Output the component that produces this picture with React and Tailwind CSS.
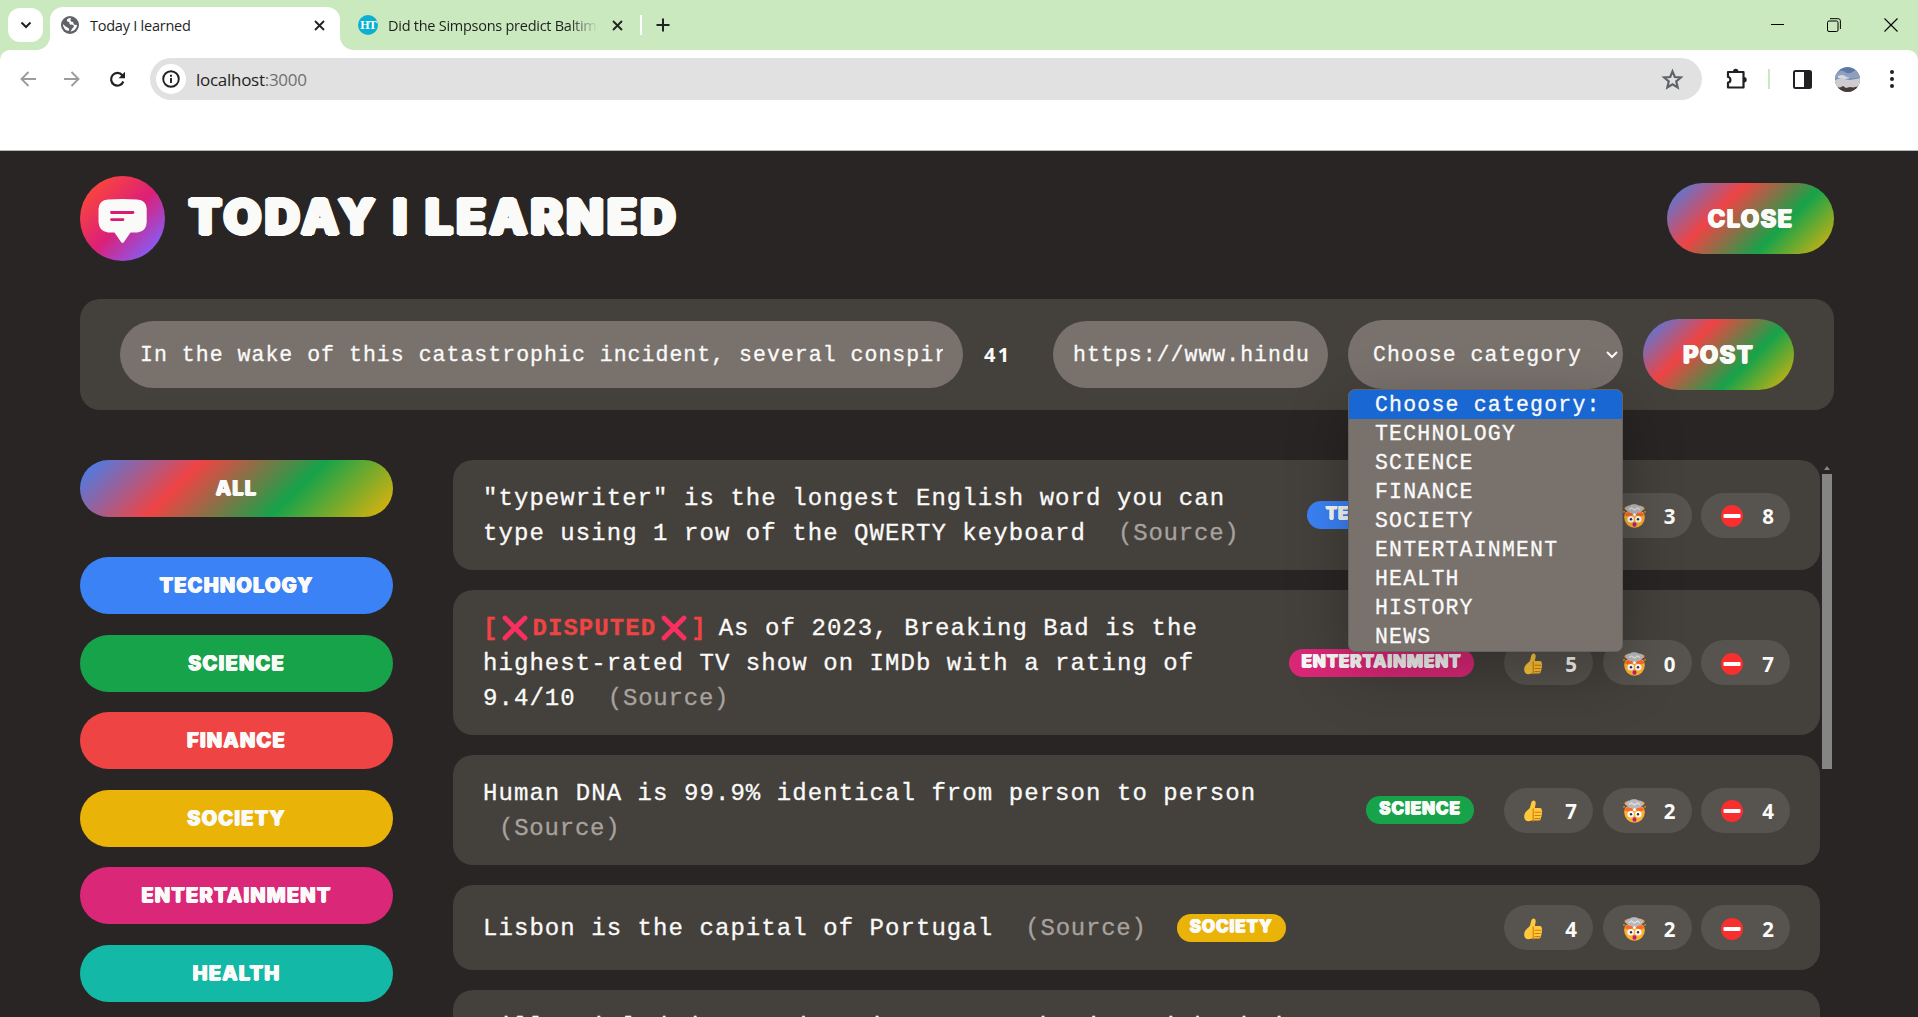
import React from "react";

const MONO = "font-['Liberation_Mono',monospace] [-webkit-text-stroke:0.3px_currentColor]";
const UI = "font-['Open_Sans','Noto_Sans',sans-serif]";
const DISPLAY = "font-['Inter',sans-serif] font-extrabold text-[#fafaf9] uppercase whitespace-nowrap";
const ROUND_SM =
  "[text-shadow:0.7px_0_0_currentColor,-0.7px_0_0_currentColor,0_0.5px_0_currentColor,0_-0.5px_0_currentColor]";
const ROUND_LG =
  "[text-shadow:2.6px_0_0_currentColor,-2.6px_0_0_currentColor,0_2px_0_currentColor,0_-2px_0_currentColor,1.8px_1.4px_0_currentColor,-1.8px_1.4px_0_currentColor,1.8px_-1.4px_0_currentColor,-1.8px_-1.4px_0_currentColor]";
const RAINBOW = "bg-[linear-gradient(135deg,#3b82f6,#ef4444,#16a34a,#eab308)]";

const CATEGORIES = [
  { name: "technology", bg: "bg-[#3b82f6]" },
  { name: "science", bg: "bg-[#16a34a]" },
  { name: "finance", bg: "bg-[#ef4444]" },
  { name: "society", bg: "bg-[#eab308]" },
  { name: "entertainment", bg: "bg-[#db2777]" },
  { name: "health", bg: "bg-[#14b8a6]" },
];

const OPTIONS = ["TECHNOLOGY", "SCIENCE", "FINANCE", "SOCIETY", "ENTERTAINMENT", "HEALTH", "HISTORY", "NEWS"];

const FACTS = [
  {
    lines: ['"typewriter" is the longest English word you can', "type using 1 row of the QWERTY keyboard"],
    tag: "technology", tagBg: "bg-[#3b82f6]", tagW: "w-[167px]", votes: [12, 3, 8],
  },
  {
    disputed: true,
    lines: ["As of 2023, Breaking Bad is the", "highest-rated TV show on IMDb with a rating of", "9.4/10"],
    tag: "entertainment", tagBg: "bg-[#db2777]", tagW: "w-[185px]", votes: [5, 0, 7],
  },
  {
    lines: ["Human DNA is 99.9% identical from person to person", ""],
    tag: "science", tagBg: "bg-[#16a34a]", tagW: "w-[108px]", votes: [7, 2, 4],
  },
  {
    lines: ["Lisbon is the capital of Portugal"],
    inlineTag: true,
    tag: "society", tagBg: "bg-[#eab308]", tagW: "w-[109px]", votes: [4, 2, 2],
  },
];

function Thumb() {
  return (
    <svg width="20" height="24" viewBox="0 0 20 24" className="mt-[2px] shrink-0">
      <path d="M9.2 1.2c1.6-1.2 3.6-.2 3.5 2.2 0 1.6-.8 3.4-.8 4.9h5c1.5 0 2 1 1.7 2 .6.6.8 1.8.1 2.6.5.8.4 2-.3 2.6.4.9.2 1.9-.6 2.4.3 1.600-.7 2.900-2.600 2.900H8.500C4 22.800 1.200 20.300 1.200 16.600c0-4 2.800-5.400 5-7.600C8 7 7.600 2.500 9.200 1.200z" transform="translate(0 .8)" fill="#ffc83d" />
      <path d="M10.200 9.500v13M11.500 13.200h6.500M11.500 16.500h6.200M11.500 19.600h5.600" stroke="#d67d00" strokeWidth="1.100" fill="none" />
    </svg>
  );
}

function MindBlown() {
  return (
    <svg width="24" height="24" viewBox="0 0 24 24" className="mt-[2px] shrink-0">
      <circle cx="12.500" cy="13.500" r="10.300" fill="#ffb02e" />
      <path d="M1 8 24 8 21 2H4z" fill="#57534e" />
      <path d="M2.600 11c3-4 6-4.500 9.900-2.500C16 6.500 19.500 7 22.400 11l-3.400 1.500-6.500-1.500L6 12.500z" fill="#ff6723" />
      <circle cx="4.500" cy="4.300" r="1.900" fill="#f59a23" />
      <circle cx="20.600" cy="4.300" r="1.900" fill="#f59a23" />
      <circle cx="2" cy="7.800" r=".9" fill="#f59a23" />
      <circle cx="23" cy="7.800" r=".9" fill="#f59a23" />
      <path d="M4 5.500C3 3.500 5.500 1 8 1.500c1-1.600 7-1.600 8.500 0 3-.4 5.500 2 4.500 4-.5 2-3 3.700-5.500 3.500l-1.500 1.500h-3.200L9.300 9C7 9.200 4.500 7.500 4 5.500z" fill="#b9b9bb" />
      <path d="M7 5.500 9.500 4l3 2 3-2 2.500 1.500" stroke="#e4e4e4" strokeWidth="1.100" fill="none" />
      <path d="M11 10.500l1.500-1.800 1.500 1.800-.6 1.500h-1.800z" fill="#fff" />
      <circle cx="8.700" cy="15.200" r="3.200" fill="#fff" />
      <circle cx="16.300" cy="15.200" r="3.200" fill="#fff" />
      <circle cx="9" cy="15.200" r="1.200" fill="#402a32" />
      <circle cx="16" cy="15.200" r="1.200" fill="#402a32" />
      <ellipse cx="12.500" cy="20.500" rx="2" ry="2.200" fill="#bb1d80" />
    </svg>
  );
}

function NoEntry() {
  return (
    <svg width="24" height="24" viewBox="0 0 24 24" className="mt-[2px] shrink-0">
      <circle cx="12" cy="12" r="11" fill="#f92f2f" />
      <rect x="3.500" y="10" width="17" height="4" rx="1" fill="#fff" />
    </svg>
  );
}

function CrossMark() {
  return (
    <svg width="26" height="26" viewBox="0 0 26 26" className="shrink-0">
      <path d="M3 3 23 23M23 3 3 23" stroke="#f92f60" strokeWidth="4.800" strokeLinecap="round" />
    </svg>
  );
}

function CloseX({ className }) {
  return (
    <svg width="11" height="11" viewBox="0 0 11 11" className={className}>
      <path d="M1 1 10 10M10 1 1 10" stroke="#202124" strokeWidth="1.800" />
    </svg>
  );
}

function Fillet({ className, flip }) {
  return (
    <svg width="14" height="14" viewBox="0 0 14 14" className={className}>
      <path d={flip ? "M0 0A14 14 0 0 0 14 14H0z" : "M14 0A14 14 0 0 1 0 14h14z"} fill="#fff" />
    </svg>
  );
}

function TabStrip() {
  return (
    <div className="flex h-[50px] items-start bg-[#cae9bf]">
      <div className="ml-2 mt-2 flex h-[34px] w-[35px] items-center justify-center rounded-xl bg-white">
        <svg width="12" height="8" viewBox="0 0 12 8"><path d="M1.500 1.500 6 6l4.500-4.500" stroke="#202124" strokeWidth="2" fill="none" /></svg>
      </div>
      <div className="relative ml-[7px] mt-[7px] flex h-[43px] w-[290px] items-center rounded-t-[13px] bg-white pb-[7px]">
        <Fillet className="absolute -left-[14px] bottom-0" />
        <Fillet className="absolute -right-[14px] bottom-0" flip />
        <svg width="18" height="18" viewBox="0 0 18 18" className="ml-[11px]">
          <circle cx="9" cy="9" r="9" fill="#5f6368" />
          <path d="M10 1.800C7.500 2 5.500 3.500 6 5c.4 1 1.800.5 2.300 1.300.5.900-.3 1.700.7 2.200 1.300.500 3.300-.3 3.800 1.200.300 1.100-.6 1.800-1.300 2.500-.8.900-1 2.300-2.300 3.200 4-.2 6.800-3.200 6.800-7-1 .8-2.500.8-3.200-.2-.6-.8-.1-1.600-.9-2.200-.8-.5-1.700-.2-2.200-1.100C9.200 3.700 9.800 3 10 1.800zM2 8c0 2.500 1 4.500 2.500 5.800C5.500 14.600 7 15 7.800 14.500c.8-.6.300-1.800-.5-2.500C6 11 3.500 10 2 8z" fill="#fff" />
        </svg>
        <span className={`${UI} ml-[11px] mt-[2px] w-[200px] text-[14.500px] tracking-[-0.240px] text-[#1f1f1f]`}>Today I learned</span>
        <CloseX className="ml-[24px]" />
      </div>
      <div className="mt-[7px] flex h-9 items-center">
        <div className="ml-[18px] flex size-5 items-center justify-center rounded-full bg-[#09b0d2] font-['Liberation_Serif',serif] text-[12px] font-bold leading-none tracking-[-1px] text-white">HT</div>
        <span className={`${UI} ml-[10px] mt-[2px] w-[210px] overflow-hidden whitespace-nowrap text-[14.500px] tracking-[-0.260px] text-[#1f1f1f] [mask-image:linear-gradient(to_right,#000_86%,transparent)]`}>
          Did the Simpsons predict Baltimore
        </span>
        <CloseX className="ml-[14px]" />
        <div className="ml-[17px] h-5 w-[2px] bg-white" />
        <svg width="14" height="14" viewBox="0 0 14 14" className="ml-[14px]"><path d="M7 .5v13M.5 7h13" stroke="#202124" strokeWidth="2" /></svg>
      </div>
      <div className="ml-auto mr-5 mt-[17px] flex items-center gap-[43px]">
        <svg width="13" height="15" viewBox="0 0 13 15"><path d="M0 7.500h13" stroke="#000" /></svg>
        <svg width="14" height="14" viewBox="0 0 14 14" fill="none" stroke="#000"><rect x=".5" y="3" width="10.500" height="10.500" rx="1.500" /><path d="M3 .7h8.200a2.200 2.200 0 0 1 2.200 2.200V11" /></svg>
        <svg width="14" height="14" viewBox="0 0 14 14"><path d="M.5.5l13 13M13.500.5l-13 13" stroke="#000" strokeWidth="1.100" /></svg>
      </div>
    </div>
  );
}

function Toolbar() {
  return (
    <div className="bg-[#cae9bf]">
      <div className="flex h-[100px] items-start rounded-t-[10px] bg-white">
        <div className="mt-2 flex h-[42px] w-full items-center">
          <svg width="16" height="16" viewBox="0 0 16 16" className="ml-5"><path d="M8.500 1 1.500 8l7 7M1.500 8H16" stroke="#9a9c9e" strokeWidth="1.900" fill="none" /></svg>
          <svg width="16" height="16" viewBox="0 0 16 16" className="ml-[28px]"><path d="M7.500 1l7 7-7 7M14.500 8H0" stroke="#9a9c9e" strokeWidth="1.900" fill="none" /></svg>
          <svg width="17" height="17" viewBox="0 0 17 17" className="ml-[29px]"><path d="M14.300 10.500A6.300 6.300 0 1 1 13.300 4.300L14.800 6" stroke="#202124" strokeWidth="2.200" fill="none" /><path d="M16 .8v6.400H9.600z" fill="#202124" /></svg>
          <div className="ml-6 flex h-[42px] w-[1552px] items-center rounded-full bg-[#e1e1e1]">
            <div className="ml-[6px] flex size-[30px] items-center justify-center rounded-full bg-white">
              <svg width="18" height="18" viewBox="0 0 18 18" fill="none" stroke="#202124" strokeWidth="1.900"><circle cx="9" cy="9" r="7.800" /><path d="M9 8v5M9 4.700v2" /></svg>
            </div>
            <span className={`${UI} ml-[10px] mt-[2px] text-[17px] tracking-[-0.280px] text-[#1f1f1f]`}>
              localhost<span className="text-[#707070]">:3000</span>
            </span>
            <svg width="23" height="23" viewBox="0 0 24 24" className="ml-auto mr-[18px]" fill="none" stroke="#5f6368" strokeWidth="2.300"><path d="M12 3.500l2.400 5.900 6.300.5-4.800 4.100 1.500 6.200L12 16.900l-5.400 3.300 1.500-6.200-4.800-4.100 6.300-.5z" /></svg>
          </div>
          <svg width="22" height="22" viewBox="0 0 22 22" className="ml-6">
            <path d="M2 4h15.500v15.500H2v-5c3.200 0 3.200-5.500 0-5.500z" fill="none" stroke="#202124" strokeWidth="2.200" strokeLinejoin="round" />
            <path d="M7 3.500a2.700 2.700 0 0 1 5.400 0zM18 9a2.700 2.700 0 0 1 0 5.400z" fill="#202124" />
          </svg>
          <div className="ml-5 h-5 w-[2px] bg-[#cae9bf]" />
          <svg width="19" height="19" viewBox="0 0 19 19" className="ml-[23px]"><rect x="1" y="1" width="17" height="17" rx="1.500" fill="none" stroke="#202124" strokeWidth="2" /><path d="M11 1h6.500v17H11z" fill="#202124" /></svg>
          <svg width="25" height="25" viewBox="0 0 25 25" className="ml-[23px] rounded-full">
            <rect width="25" height="25" fill="#5f79a6" />
            <path d="M0 6q6-4 10-1t9-1 6 2v4q-6 3-11 1T0 12z" fill="#8fa0bf" />
            <path d="M0 13q5-3 10-1t15-1v10H0z" fill="#cfcbd0" />
            <path d="M3 9q4-2 7 0t6 2q-6 2-13 0z" fill="#d5d9e2" />
            <path d="M0 20l5 .5 3-1.500 3 2 4-1 3 .5 7-1.500v6H0z" fill="#4a3b39" />
          </svg>
          <svg width="4" height="20" viewBox="0 0 4 20" className="ml-[30px]" fill="#202124"><circle cx="2" cy="3" r="2" /><circle cx="2" cy="10" r="2" /><circle cx="2" cy="17" r="2" /></svg>
        </div>
      </div>
      <div className="h-px bg-[#b4bab2]" />
    </div>
  );
}

function Logo() {
  return (
    <svg width="85" height="85" viewBox="0 0 85 85">
      <defs>
        <linearGradient id="logo" x1="0" y1="0" x2="1" y2="1">
          <stop offset=".08" stopColor="#ff4a35" />
          <stop offset=".52" stopColor="#db2078" />
          <stop offset=".9" stopColor="#8060ff" />
        </linearGradient>
      </defs>
      <circle cx="42.500" cy="42.500" r="42.500" fill="url(#logo)" />
      <path d="M28 23.500Q42.500 22.500 57 23.500 66.500 24 66.700 33v13q-.2 9.500-9.200 10.500H50.500L44 66q-1.500 2-3 0L34.500 56.500H28q-9-1-9.500-10.500V33q.5-9 9.500-9.500z" fill="#fafaf9" />
      <path d="M31.500 36.500h21.500M31.500 43.600h11.500" stroke="#db1a72" strokeWidth="2.800" strokeLinecap="round" />
    </svg>
  );
}

function Dropdown() {
  return (
    <div className={`${MONO} absolute left-0 top-[69px] z-10 w-[275px] overflow-hidden rounded-[7px] border border-[#65625f] bg-[#78716c] text-[21.500px] tracking-[1.200px] text-[#fafaf9] shadow-[0_20px_60px_rgba(0,0,0,0.280)]`}>
      <div className="h-[29px] bg-[#1967d2] pl-[26px] leading-[30px]">Choose category:</div>
      {OPTIONS.map((o) => (
        <div key={o} className="h-[29px] pl-[26px] leading-[30px]">{o}</div>
      ))}
    </div>
  );
}

function FactForm() {
  const field = `${MONO} h-[67px] overflow-hidden whitespace-nowrap rounded-full bg-[#78716c] px-5 text-[21.500px] leading-[69px] tracking-[1.030px] text-[#fafaf9]`;
  return (
    <div className="mt-[38px] flex h-[111px] items-center rounded-[20px] bg-[#44403c] px-10">
      <div className={`${field} w-[843px]`}>
        <div className="overflow-hidden">In the wake of this catastrophic incident, several conspir</div>
      </div>
      <span className="ml-[21px] w-[49px] font-['Noto_Sans',sans-serif] text-[20px] font-bold tracking-[2.200px] text-[#fafaf9]">41</span>
      <div className={`${field} ml-5 w-[275px]`}>
        <div className="overflow-hidden">https://www.hindu</div>
      </div>
      <div className="relative ml-5">
        <div className={`${MONO} flex h-[69px] w-[275px] items-center rounded-full bg-[#78716c] pl-[25px] text-[21.500px] tracking-[1.030px] text-[#fafaf9]`}>
          <span className="mt-[2px] w-[209px] overflow-hidden whitespace-nowrap">Choose category</span>
          <svg width="12" height="8" viewBox="0 0 12 8" className="ml-auto mr-[5px]"><path d="M1 1l5 5 5-5" stroke="#fafaf9" strokeWidth="2" fill="none" /></svg>
        </div>
        <Dropdown />
      </div>
      <div className={`${DISPLAY} ${ROUND_SM} ${RAINBOW} ml-5 flex h-[71px] w-[151px] items-center justify-center rounded-full text-[24px] tracking-[1.200px]`}>Post</div>
    </div>
  );
}

function Sidebar() {
  const btn = `${DISPLAY} ${ROUND_SM} flex h-[57px] shrink-0 items-center justify-center rounded-full pb-px text-[20px] tracking-[1.200px]`;
  return (
    <div className="flex w-[313px] shrink-0 flex-col gap-[20.600px]">
      <div className={`${btn} ${RAINBOW} mb-[19.400px]`}>All</div>
      {CATEGORIES.map((c) => (
        <div key={c.name} className={`${btn} ${c.bg}`}>{c.name}</div>
      ))}
    </div>
  );
}

function Tag({ fact }) {
  return (
    <span className={`${DISPLAY} ${ROUND_SM} ${fact.tagBg} ${fact.tagW} flex h-7 shrink-0 items-center justify-center rounded-full pb-[2px] text-[17px] tracking-[0.900px]`}>
      {fact.tag}
    </span>
  );
}

function Votes({ votes }) {
  const icons = [<Thumb key="t" />, <MindBlown key="m" />, <NoEntry key="n" />];
  return (
    <div className="flex gap-[9.500px]">
      {votes.map((v, i) => (
        <div key={i} className="flex h-[45px] w-[89px] items-center justify-between rounded-full bg-[#57534e] pl-[19px] pr-4">
          {icons[i]}
          <span className="mt-[3px] font-['Noto_Sans',sans-serif] text-[20.500px] font-bold leading-none text-[#fafaf9]">{v}</span>
        </div>
      ))}
    </div>
  );
}

function Fact({ fact }) {
  return (
    <div className="flex shrink-0 items-center rounded-[20px] bg-[#44403c] px-[30px] py-5">
      <div className={`${MONO} whitespace-pre text-[24px] leading-[35px] tracking-[1.060px] text-[#fafaf9]`}>
        {fact.lines.map((line, i) => (
          <div key={i} className="flex h-[35px] items-center pt-px">
            {fact.disputed && i === 0 && (
              <span className="mr-[12px] flex items-center font-bold text-[#ef4444]">
                [<span className="ml-[4px] mr-[4px] flex"><CrossMark /></span>DISPUTED<span className="ml-[5px] mr-[4px] flex"><CrossMark /></span>]
              </span>
            )}
            <span>{line}</span>
            {i === fact.lines.length - 1 && (
              <span className={`tracking-[0.780px] text-[#a8a29e] ${line ? "ml-[32px]" : "ml-[16px]"}`}>(Source)</span>
            )}
          </div>
        ))}
      </div>
      <div className={fact.inlineTag ? "ml-[30px]" : "ml-auto"}><Tag fact={fact} /></div>
      <div className={fact.inlineTag ? "ml-auto" : "ml-[30px]"}><Votes votes={fact.votes} /></div>
    </div>
  );
}

export default function App() {
  return (
    <div className="flex h-[1017px] w-[1918px] flex-col overflow-hidden bg-[#292524]">
      <TabStrip />
      <Toolbar />
      <div className="flex min-h-0 flex-1 flex-col overflow-hidden pl-20 pr-[84px] pt-[25px]">
        <header className="flex items-center">
          <Logo />
          <h1 className={`${DISPLAY} ${ROUND_LG} -mt-1 ml-6 text-[48px] leading-none tracking-[4px]`}>Today I Learned</h1>
          <div className={`${DISPLAY} ${ROUND_SM} ${RAINBOW} ml-auto flex h-[71px] w-[167px] items-center justify-center rounded-full text-[24px] tracking-[1.200px]`}>Close</div>
        </header>
        <FactForm />
        <main className="mt-[50px] flex min-h-0 flex-1">
          <Sidebar />
          <section className="ml-[60px] flex w-[1367px] shrink-0 flex-col gap-5">
            {FACTS.map((f) => <Fact key={f.tag} fact={f} />)}
            <div className={`${MONO} h-[110px] shrink-0 whitespace-nowrap rounded-[20px] bg-[#44403c] px-[30px] py-5 text-[24px] leading-[35px] tracking-[1.060px] text-[#fafaf9]`}>
              Millennial dads spend 3 times as much time with their
            </div>
          </section>
          <div className="ml-[2px] flex flex-col items-center pt-[6px]">
            <svg width="6" height="4" viewBox="0 0 6 4" className="mb-1"><path d="M3 0l3 4H0z" fill="#858585" /></svg>
            <div className="h-[295px] w-[10px] bg-[#858585]" />
          </div>
        </main>
      </div>
    </div>
  );
}
